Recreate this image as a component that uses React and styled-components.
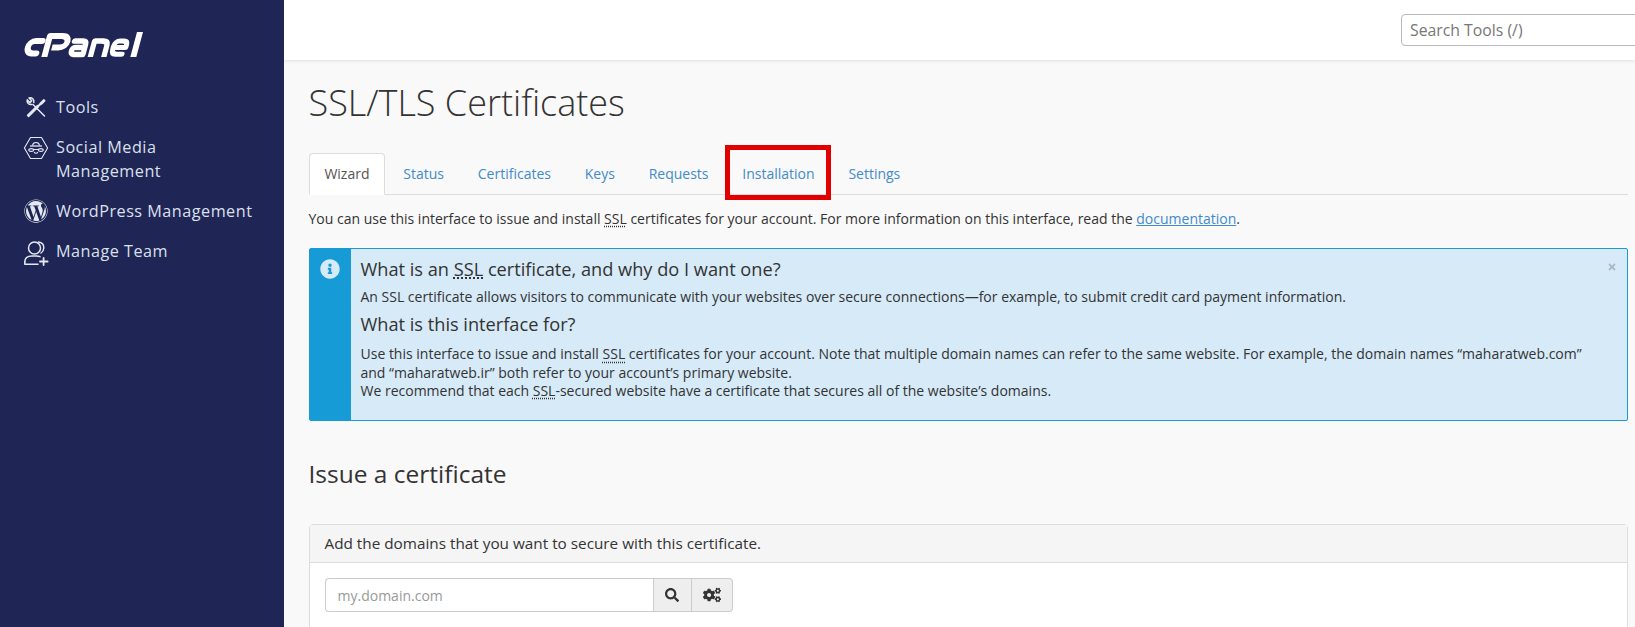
import React from 'react'
import styled, { createGlobalStyle } from 'styled-components'
import { FaWordpress, FaInfoCircle, FaSearch, FaCogs, FaTimes } from 'react-icons/fa'

const GlobalStyle = createGlobalStyle`
    html, body {
        margin: 0;
        height: 100%;
        overflow: hidden;
        font-family: "Open Sans", "Noto Sans", sans-serif;
        color: #333;
    }
    * { box-sizing: border-box; }
`

const Page = styled.div`
    display: flex;
    width: 100%;
    height: 627px;
    overflow: hidden;
`

const Sidebar = styled.aside`
    flex: 0 0 284px;
    background: #1f2554;
    padding: 32px 20px 0 24px;
`

const LogoLink = styled.a`
    display: block;
    height: 26px;
    margin-bottom: 37px;
`

const NavList = styled.nav`
    display: flex;
    flex-direction: column;
    gap: 16px;
`

const NavItem = styled.a`
    display: flex;
    align-items: flex-start;
    gap: 8px;
    color: #dbe0ee;
    font-size: 16.2px;
    line-height: 24px;
    letter-spacing: 0.5px;
`

const NavIcon = styled.span`
    flex: 0 0 24px;
    width: 24px;
    height: 24px;
    color: #e4e8f2;
    svg { display: block; width: 24px; height: 24px; overflow: visible; }
`

const Main = styled.div`
    flex: 1;
    min-width: 0;
    display: flex;
    flex-direction: column;
    background: #f9f9f9;
    overflow: hidden;
`

const TopBar = styled.header`
    flex: 0 0 60px;
    display: flex;
    justify-content: flex-end;
    padding-top: 14px;
    background: #fff;
    box-shadow: 0 1px 3px rgba(0, 0, 0, 0.1);
    position: relative;
`

const SearchBox = styled.input`
    width: 260px;
    height: 32px;
    margin-right: -26px;
    padding: 0 8px;
    border: 1px solid #b9b9c0;
    border-radius: 4px;
    background: #fff;
    font: 15.8px "Open Sans", sans-serif;
    &::placeholder { color: #777; opacity: 1; }
`

const Content = styled.main`
    padding: 0 7px 0 24.5px;
`

const Title = styled.h1`
    margin: 17px 0 0;
    font-size: 36px;
    line-height: 52px;
    font-weight: 300;
    color: #333;
`

const TabRow = styled.div`
    display: flex;
    gap: 2px;
    height: 42px;
    margin-top: 24px;
    border-bottom: 1px solid #ddd;
`

const Tab = styled.a`
    position: relative;
    height: 42px;
    padding: 0 14.9px;
    line-height: 40px;
    font-size: 14px;
    color: ${p => (p.$active ? '#555' : '#428bca')};
    background: ${p => (p.$active ? '#fff' : 'transparent')};
    border: 1px solid ${p => (p.$active ? '#ddd' : 'transparent')};
    border-bottom-color: ${p => (p.$active ? '#fff' : 'transparent')};
    border-radius: 4px 4px 0 0;
    ${p => p.$marked && `
        &::after {
            content: '';
            position: absolute;
            left: -2px;
            right: -2px;
            top: -9px;
            bottom: -6px;
            border: 5px solid #e00000;
        }
    `}
`

const Intro = styled.p`
    margin: 14px 0 0;
    font-size: 14px;
    line-height: 20px;
`

const DocLink = styled.a`
    color: #428bca;
    text-decoration: underline;
`

const Abbr = styled.abbr`
    text-decoration: underline dotted;
    text-underline-offset: 2px;
`

const Alert = styled.section`
    display: flex;
    position: relative;
    height: 173px;
    margin-top: 19px;
    background: #d6eaf8;
    border: 1px solid #179bd7;
    border-radius: 2px;
`

const AlertIcon = styled.div`
    flex: 0 0 41px;
    display: flex;
    justify-content: center;
    padding-top: 10px;
    background: #179bd7;
    color: #d6eaf8;
    font-size: 20px;
    svg { display: block; }
`

const AlertBody = styled.div`
    padding: 6px 30px 0 10px;
    font-size: 14px;
    line-height: 18.4px;
`

const AlertTitle = styled.h4`
    margin: 0;
    font-size: 18.2px;
    line-height: 28px;
    font-weight: 500;
    color: #333;
`

const AlertText = styled.p`
    margin: 5px 0 4px;
`

const AlertCopy = styled.p`
    margin: 7px 0 0;
`

const Close = styled.span`
    position: absolute;
    top: 12px;
    right: 10px;
    color: #a9b8c2;
    font-size: 10px;
`

const Section = styled.h2`
    margin: 37px 0 0;
    font-size: 24.5px;
    line-height: 32px;
    font-weight: 500;
    color: #333;
`

const Panel = styled.div`
    margin-top: 34px;
    height: 140px;
    background: #fff;
    border: 1px solid #ddd;
    border-radius: 4px 4px 0 0;
`

const PanelHead = styled.div`
    height: 38px;
    padding: 0 15px;
    background: #f5f5f5;
    border-bottom: 1px solid #ddd;
    font-size: 15.3px;
    line-height: 36px;
    color: #333;
`

const PanelBody = styled.div`
    padding: 15px;
`

const InputGroup = styled.div`
    display: flex;
    height: 34px;
`

const DomainInput = styled.input`
    width: 328px;
    height: 34px;
    padding: 0 12px;
    border: 1px solid #ccc;
    border-right: 0;
    border-radius: 4px 0 0 4px;
    font: 14px "Open Sans", sans-serif;
    &::placeholder { color: #999; opacity: 1; }
`

const AddonButton = styled.button`
    width: ${p => p.$width}px;
    height: 34px;
    display: flex;
    align-items: center;
    justify-content: center;
    padding: 0;
    background: #eee;
    border: 1px solid #ccc;
    border-left-width: ${p => (p.$last ? 0 : '1px')};
    border-radius: ${p => (p.$last ? '0 4px 4px 0' : 0)};
    color: #333;
    font-size: ${p => (p.$last ? 18 : 14)}px;
`

const CpanelLogo = () => (
  <svg width="120" height="26" viewBox="0 0 120 26" fill="none" stroke="#fff" strokeWidth="6" strokeLinecap="round" strokeLinejoin="round">
    <g transform="translate(3 0) skewX(-15)">
      <path d="M18 9 H11 C7 9 5 12 5 15 C5 19 7.5 21.5 11 21.5 H15" />
      <path d="M24 25 V4 H36 C41 4 43 6.5 43 9.5 C43 13 40.5 15.5 36 15.5 H29" strokeLinecap="butt" />
      <path d="M50 9 H58 C61 9 62 10.5 62 13 V22.5 H53 C50.5 22.5 49.5 20.5 49.5 18.5 C49.5 16.5 50.5 15.5 53 15.5 H61" strokeWidth="5.4" />
      <path d="M70 25 V9 H78 C81.5 9 83.5 10.5 83.5 13.5 V25" strokeLinecap="butt" strokeWidth="5.4" />
      <path d="M103 15.5 H92 M103 15.5 V13 C103 10.5 101.5 9 99 9 H95 C92 9 90.3 11.5 90.3 14 V17 C90.3 20.5 92 22.3 95 22.3 H101" strokeWidth="5" />
      <path d="M113 0 V25" strokeWidth="6" strokeLinecap="butt" />
    </g>
  </svg>
)

const ToolsIcon = () => (
  <svg viewBox="0 0 24 24" fill="none" stroke="currentColor" strokeWidth="1.5" strokeLinecap="round" strokeLinejoin="round">
    <path d="M9 9.5 L20.5 21" />
    <path d="M9.8 7.5 C10.5 4.5 8 2.2 5 3 L7.8 5.8 L6 7.6 L3.2 4.9 C2.4 7.7 5 10.2 8 9.4" />
    <path d="M3.6 20.4 L4.6 21.4 L14.5 11.6 L13.5 10.6 Z" />
    <path d="M14.2 11 L17 7.5 L19.8 4.8 L20.8 5.8 L18 8.6 Z" />
  </svg>
)

const SocialIcon = () => (
  <svg viewBox="0 0 24 24" fill="none" stroke="currentColor" strokeWidth="1.1" strokeLinejoin="round">
    <path d="M6.5 2.5 H17.5 L23.6 13 L17.5 23.5 H6.5 L0.4 13 Z" />
    <path d="M8.5 10.5 C9 6.5 15 6.5 15.5 10.5" />
    <path d="M6 11 H18" strokeWidth="1.3" />
    <ellipse cx="7.2" cy="15" rx="2.4" ry="1.4" />
    <ellipse cx="16.8" cy="15" rx="2.4" ry="1.4" />
    <path d="M9.6 14.5 H14.4 M10.2 17 C10.8 18.6 13.2 18.6 13.8 17" />
  </svg>
)

const TeamIcon = () => (
  <svg viewBox="0 0 24 24" fill="none" stroke="currentColor" strokeWidth="1.5" strokeLinecap="round" strokeLinejoin="round">
    <circle cx="10.5" cy="9" r="6" />
    <path d="M14.5 3 C18 3.5 20 6 19.8 9 C19.7 11.2 18.5 13 17 14" />
    <path d="M0.8 23 C0.8 19 4 17 8 17 H12.5 C13.8 17 15 17.2 16 17.6" />
    <path d="M0.8 23 V25.2 H14" />
    <path d="M19.6 19 V26 M16 22.5 H23.6" strokeWidth="1.8" />
  </svg>
)

const App = () => {
  return (
    <Page>
      <GlobalStyle />
      <Sidebar>
        <LogoLink><CpanelLogo /></LogoLink>
        <NavList>
          <NavItem><NavIcon><ToolsIcon /></NavIcon>Tools</NavItem>
          <NavItem><NavIcon><SocialIcon /></NavIcon><span>Social Media<br />Management</span></NavItem>
          <NavItem><NavIcon><FaWordpress /></NavIcon>WordPress Management</NavItem>
          <NavItem><NavIcon><TeamIcon /></NavIcon>Manage Team</NavItem>
        </NavList>
      </Sidebar>
      <Main>
        <TopBar>
          <SearchBox placeholder="Search Tools (/)" />
        </TopBar>
        <Content>
          <Title>SSL/TLS Certificates</Title>
          <TabRow>
            <Tab $active>Wizard</Tab>
            <Tab>Status</Tab>
            <Tab>Certificates</Tab>
            <Tab>Keys</Tab>
            <Tab>Requests</Tab>
            <Tab $marked>Installation</Tab>
            <Tab>Settings</Tab>
          </TabRow>
          <Intro>
            You can use this interface to issue and install <Abbr>SSL</Abbr> certificates for your account. For more information on this interface, read the <DocLink>documentation</DocLink>.
          </Intro>
          <Alert>
            <AlertIcon><FaInfoCircle /></AlertIcon>
            <AlertBody>
              <AlertTitle>What is an <Abbr>SSL</Abbr> certificate, and why do I want one?</AlertTitle>
              <AlertText>An SSL certificate allows visitors to communicate with your websites over secure connections—for example, to submit credit card payment information.</AlertText>
              <AlertTitle>What is this interface for?</AlertTitle>
              <AlertCopy>
                Use this interface to issue and install <Abbr>SSL</Abbr> certificates for your account. Note that multiple domain names can refer to the same website. For example, the domain names “maharatweb.com” and “maharatweb.ir” both refer to your account’s primary website.<br />
                We recommend that each <Abbr>SSL</Abbr>-secured website have a certificate that secures all of the website’s domains.
              </AlertCopy>
            </AlertBody>
            <Close><FaTimes /></Close>
          </Alert>
          <Section>Issue a certificate</Section>
          <Panel>
            <PanelHead>Add the domains that you want to secure with this certificate.</PanelHead>
            <PanelBody>
              <InputGroup>
                <DomainInput placeholder="my.domain.com" />
                <AddonButton $width={39}><FaSearch /></AddonButton>
                <AddonButton $width={41.5} $last><FaCogs /></AddonButton>
              </InputGroup>
            </PanelBody>
          </Panel>
        </Content>
      </Main>
    </Page>
  )
}

export default App
